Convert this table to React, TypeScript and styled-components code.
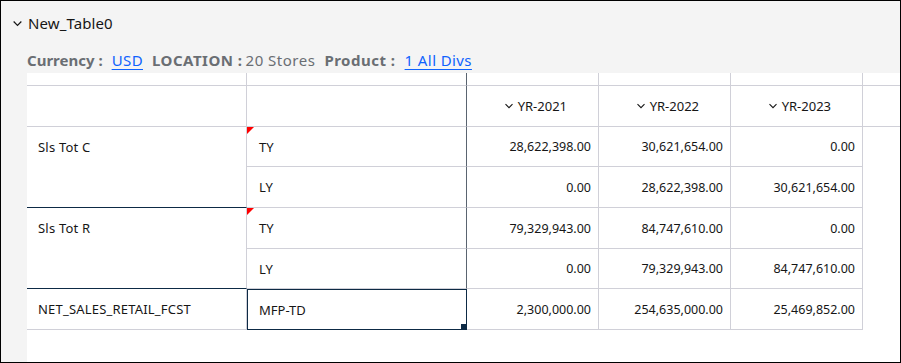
import * as React from 'react';
import styled, { createGlobalStyle } from 'styled-components';

interface Row {
    group: string,
    groupSpan: number,
    measure: string,
    values: string[],
    flagged?: boolean,
    selected?: boolean,
    height: number,
}

const years = ['YR-2021', 'YR-2022', 'YR-2023'];

const rows: Row[] = [
    { group: 'Sls Tot C', groupSpan: 2, measure: 'TY', values: ['28,622,398.00', '30,621,654.00', '0.00'], flagged: true, height: 40 },
    { group: '', groupSpan: 0, measure: 'LY', values: ['0.00', '28,622,398.00', '30,621,654.00'], height: 41 },
    { group: 'Sls Tot R', groupSpan: 2, measure: 'TY', values: ['79,329,943.00', '84,747,610.00', '0.00'], flagged: true, height: 41 },
    { group: '', groupSpan: 0, measure: 'LY', values: ['0.00', '79,329,943.00', '84,747,610.00'], height: 40 },
    { group: 'NET_SALES_RETAIL_FCST', groupSpan: 1, measure: 'MFP-TD', values: ['2,300,000.00', '254,635,000.00', '25,469,852.00'], selected: true, height: 41 },
];

const GlobalStyle = createGlobalStyle`
    body {
        margin: 0;
        font-family: "Noto Sans", "Open Sans", sans-serif;
        color: #161616;
    }
`;

const Chevron: React.FC<{ size?: number }> = ({ size = 10 }) => (
    <svg width={size} height={size} viewBox="0 0 10 10" fill="none">
        <path d="M1.5 3.2 L5 6.7 L8.5 3.2" stroke="#161616" strokeWidth="1.1" />
    </svg>
);

const App: React.FC = () => {
    const rowTemplate = ['13px', '41px', ...rows.map(r => `${r.height}px`)].join(' ');

    const renderRows = () => {
        let line = 3;
        return rows.map((row, i) => {
            const start = line;
            line += 1;
            return (
                <React.Fragment key={i}>
                    {row.groupSpan > 0 && (
                        <GroupCell
                            $groupEnd={row.groupSpan > 1}
                            style={{ gridRow: `${start} / span ${row.groupSpan}` }}
                        >
                            {row.group}
                        </GroupCell>
                    )}
                    <MeasureCell $selected={row.selected} $dark={!row.selected}>
                        {row.flagged && <Flag />}
                        {row.measure}
                    </MeasureCell>
                    {row.values.map((v, j) => (
                        <ValueCell key={j}>{v}</ValueCell>
                    ))}
                    <Filler />
                </React.Fragment>
            );
        });
    };

    return (
        <Frame>
            <GlobalStyle />
            <Title>
                <Chevron size={11} />
                <span>New_Table0</span>
            </Title>
            <Filters>
                <FilterLabel>Currency :</FilterLabel>
                <FilterLink>USD</FilterLink>
                <FilterLabel $tight $spaced>LOCATION :</FilterLabel>
                <FilterValue>20 Stores</FilterValue>
                <FilterLabel $spaced>Product :</FilterLabel>
                <FilterLink>1 All Divs</FilterLink>
            </Filters>
            <Panel>
                <Grid style={{ gridTemplateRows: rowTemplate }}>
                    <StripCell />
                    <StripCell $dark />
                    <StripCell />
                    <StripCell />
                    <StripCell />
                    <StripCell $last />

                    <HeadCell />
                    <HeadCell $dark />
                    {years.map(y => (
                        <HeadCell key={y} $year>
                            <Chevron />
                            <span>{y}</span>
                        </HeadCell>
                    ))}
                    <HeadCell $last />

                    {renderRows()}
                </Grid>
            </Panel>
        </Frame>
    );
};

const Frame = styled.div`
    width: 901px;
    height: 363px;
    box-sizing: border-box;
    border: 1px solid #000;
    background: #f4f4f4;
    display: flex;
    flex-direction: column;
    overflow: hidden;
`;

const Title = styled.div`
    display: flex;
    align-items: center;
    gap: 5px;
    height: 43px;
    padding: 0 0 0 11px;
    font-size: 15px;
    letter-spacing: 0.1px;

    svg {
        margin-top: 1px;
    }
`;

const Filters = styled.div`
    display: flex;
    align-items: baseline;
    height: 29px;
    padding: 6px 0 0 26px;
    box-sizing: border-box;
    font-size: 15px;
`;

const FilterLabel = styled.span<{ $tight?: boolean, $spaced?: boolean }>`
    font-weight: 700;
    color: #6a6e73;
    letter-spacing: ${p => (p.$spaced ? '0.5px' : '0')};
    margin-right: ${p => (p.$tight ? '3px' : '9px')};
`;

const FilterValue = styled.span`
    color: #6a6e73;
    letter-spacing: 0.5px;
    margin-right: 9px;
`;

const FilterLink = styled.span`
    color: #0f62fe;
    letter-spacing: 0.4px;
    text-decoration: underline;
    text-underline-offset: 3px;
    margin-right: 9px;
`;

const Panel = styled.div`
    flex: 1;
    margin-left: 26px;
    background: #fff;
`;

const Grid = styled.div`
    display: grid;
    grid-template-columns: 220px 220px 132px 132px 132px 1fr;
    font-size: 12.5px;
`;

const Cell = styled.div`
    box-sizing: border-box;
    border-bottom: 1px solid #d0d0d8;
    border-right: 1px solid #d0d0d8;
    display: flex;
    align-items: center;
    position: relative;
`;

const StripCell = styled(Cell)<{ $dark?: boolean, $last?: boolean }>`
    ${p => p.$dark && 'border-right-color: #5a6470;'}
    ${p => p.$last && 'border-right: none;'}
`;

const HeadCell = styled(Cell)<{ $dark?: boolean, $last?: boolean, $year?: boolean }>`
    justify-content: flex-end;
    gap: 4px;
    font-size: 13px;
    padding-right: ${p => (p.$year ? '31px' : '0')};
    ${p => p.$dark && 'border-right-color: #5a6470;'}
    ${p => p.$last && 'border-right: none;'}
`;

const GroupCell = styled(Cell)<{ $groupEnd?: boolean }>`
    align-items: flex-start;
    padding: 11px 0 0 11px;
    font-size: 13px;
    letter-spacing: 0.2px;
    ${p => p.$groupEnd && 'border-bottom-color: #0d2a45;'}
`;

const MeasureCell = styled(Cell)<{ $selected?: boolean, $dark?: boolean }>`
    padding-left: 12px;
    font-size: 13px;
    ${p => p.$dark && 'border-right-color: #5a6470;'}
    ${p => p.$selected && `
        border: 1px solid #0d2a45;
        padding-left: 11px;
        &::after {
            content: '';
            position: absolute;
            right: -1px;
            bottom: -1px;
            width: 6px;
            height: 6px;
            background: #0d2a45;
        }
    `}
`;

const Flag = styled.span`
    position: absolute;
    left: 0;
    top: 0;
    width: 0;
    height: 0;
    border-top: 7px solid #ff0000;
    border-right: 7px solid transparent;
`;

const ValueCell = styled(Cell)`
    justify-content: flex-end;
    padding-right: 7px;
`;

const Filler = styled.div``;

export default App;
